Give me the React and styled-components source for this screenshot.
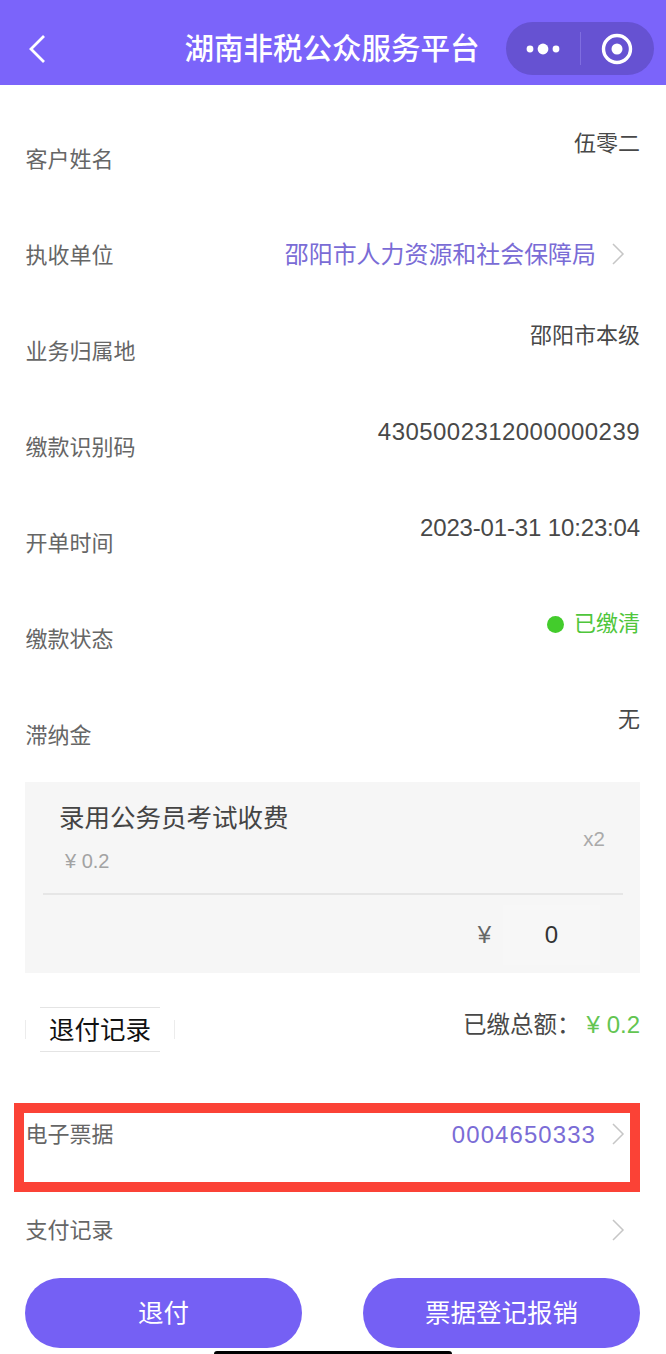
import React from 'react';
import styled, { createGlobalStyle } from 'styled-components';

const GlobalStyle = createGlobalStyle`
    html, body {
        margin: 0;
        padding: 0;
        background: #ffffff;
    }
    body {
        font-family: "Liberation Sans", "Noto Sans CJK SC", sans-serif;
    }
`

const Page = styled.div`
    position: relative;
    width: 666px;
    height: 1354px;
    overflow: hidden;
    background: #ffffff;
`

const NavBar = styled.div`
    position: relative;
    display: flex;
    align-items: center;
    justify-content: center;
    box-sizing: border-box;
    height: 85px;
    padding-top: 12px;
    background: #7b64fa;
`

const BackIcon = styled.svg`
    position: absolute;
    left: 27px;
    top: 33px;
    width: 20px;
    height: 32px;
`

const Title = styled.div`
    margin-left: -2px;
    font-size: 29.5px;
    font-weight: 500;
    line-height: 46px;
    color: #ffffff;
`

const Capsule = styled.div`
    position: absolute;
    left: 506px;
    top: 22px;
    display: flex;
    align-items: center;
    width: 148px;
    height: 53px;
    border-radius: 27px;
    background: #6652d2;
`

const CapsuleSide = styled.div`
    flex: 1;
    display: flex;
    align-items: center;
    justify-content: center;
`

const CapsuleLine = styled.div`
    width: 1px;
    height: 33px;
    background: #7f6de0;
`

const Content = styled.div`
    padding: 25px 26px 0 25px;
`

const Row = styled.div`
    position: relative;
    display: flex;
    align-items: center;
    justify-content: space-between;
    height: 92px;
    padding-top: 4px;
`

const Label = styled.div`
    padding-left: 0.5px;
    font-size: 22px;
    line-height: 30px;
    color: #666666;
`

const Value = styled.div`
    align-self: flex-start;
    padding-top: 15px;
    font-size: ${(props) => (props.$spacing !== undefined ? 24 : 22)}px;
    line-height: 30px;
    color: #484848;
    letter-spacing: ${(props) => props.$spacing || 0}px;
`

const LinkValue = styled.div`
    display: flex;
    align-items: center;
    margin-top: ${(props) => props.$offset || 0}px;
    font-size: 23.95px;
    line-height: 30px;
    color: #7a6cd6;
    letter-spacing: ${(props) => props.$spacing || 0}px;
`

const Chevron = styled.svg`
    flex-shrink: 0;
    width: 14px;
    height: 24px;
    margin: 0 15px 2px 15px;
`

const Status = styled(Value)`
    display: flex;
    align-items: center;
    color: #4fc63b;
`

const StatusDot = styled.span`
    width: 17px;
    height: 17px;
    margin-right: 10px;
    border-radius: 50%;
    background: #43cc2c;
`

const Card = styled.div`
    height: 191px;
    background: #f6f6f6;
`

const CardTop = styled.div`
    display: flex;
    align-items: center;
    justify-content: space-between;
    height: 111px;
    padding: 0 35px 0 34px;
`

const ItemName = styled.div`
    font-size: 25.5px;
    line-height: 34px;
    color: #444444;
`

const ItemPrice = styled.div`
    margin-top: 13px;
    padding-left: 6px;
    font-size: 20px;
    line-height: 26px;
    color: #a3a3a3;
`

const ItemCount = styled.div`
    padding-top: 2px;
    font-size: 20.5px;
    color: #aaaaaa;
`

const CardLine = styled.div`
    height: 2px;
    margin: 0 17px 0 18px;
    background: #e6e6e6;
`

const CardBottom = styled.div`
    display: flex;
    align-items: center;
    justify-content: flex-end;
    height: 78px;
    padding: 2px 40px 0 0;
    box-sizing: border-box;
`

const Yen = styled.div`
    margin-right: 12px;
    font-size: 24px;
    color: #666666;
`

const AmountBox = styled.div`
    width: 97px;
    height: 60px;
    font-size: 24px;
    line-height: 60px;
    text-align: center;
    color: #333333;
    background: #f7f7f7;
`

const RefundRow = styled.div`
    display: flex;
    align-items: flex-start;
    justify-content: space-between;
    height: 78px;
    margin-top: 34px;
`

const RefundButton = styled.button`
    position: relative;
    width: 150px;
    height: 45px;
    padding: 0 0 5px 0;
    border: none;
    font-family: inherit;
    font-size: 25.5px;
    color: #111111;
    background: #ffffff;

    &::before {
        content: "";
        position: absolute;
        left: 15px;
        right: 15px;
        top: 0;
        bottom: 0;
        border-top: 1px solid #e4e4e4;
        border-bottom: 1px solid #e4e4e4;
    }

    &::after {
        content: "";
        position: absolute;
        left: 0;
        right: 0;
        top: 13px;
        bottom: 13px;
        border-left: 1px solid #ececec;
        border-right: 1px solid #ececec;
    }
`

const Total = styled.div`
    display: flex;
    align-items: baseline;
    padding-top: 2px;
    font-size: 23.5px;
    line-height: 32px;
    color: #484848;
`

const TotalAmount = styled.span`
    margin-left: 6px;
    font-size: 24px;
    color: #63c551;
`

const Highlight = styled.div`
    position: absolute;
    left: -11px;
    top: 18px;
    width: 626px;
    height: 89px;
    box-sizing: border-box;
    border: 10px solid #fb4236;
    pointer-events: none;
`

const Buttons = styled.div`
    display: flex;
    justify-content: space-between;
    margin-top: 1px;
`

const ActionButton = styled.button`
    width: 277px;
    height: 70px;
    padding: 0 0 5px 0;
    border: none;
    border-radius: 35px;
    font-family: inherit;
    font-size: 25.5px;
    color: #ffffff;
    background: #7560f4;
`

const HomeBar = styled.div`
    position: absolute;
    left: 214px;
    bottom: 0;
    width: 238px;
    height: 3px;
    border-radius: 3px 3px 0 0;
    background: #000000;
`

function RowChevron() {
    return (
        <Chevron viewBox="0 0 14 24" fill="none">
            <path d="M2 2 L12 12 L2 22" stroke="#c6c6c6" strokeWidth="1.5" />
        </Chevron>
    );
}

const rows = [
    { label: '客户姓名', value: '伍零二' },
    { label: '执收单位', link: '邵阳市人力资源和社会保障局' },
    { label: '业务归属地', value: '邵阳市本级' },
    { label: '缴款识别码', value: '4305002312000000239', spacing: 0.45 },
    { label: '开单时间', value: '2023-01-31 10:23:04', spacing: -0.15 },
    { label: '缴款状态', status: '已缴清' },
    { label: '滞纳金', value: '无' },
];

function App() {
    return (
        <Page>
            <GlobalStyle />
            <NavBar>
                <BackIcon viewBox="0 0 20 32" fill="none">
                    <path d="M17 3 L4 16 L17 29" stroke="#ffffff" strokeWidth="2.8" />
                </BackIcon>
                <Title>湖南非税公众服务平台</Title>
                <Capsule>
                    <CapsuleSide>
                        <svg width="34" height="14" viewBox="0 0 34 14">
                            <circle cx="4" cy="7" r="3.4" fill="#ffffff" />
                            <circle cx="17" cy="7" r="5.4" fill="#ffffff" />
                            <circle cx="30" cy="7" r="3.4" fill="#ffffff" />
                        </svg>
                    </CapsuleSide>
                    <CapsuleLine />
                    <CapsuleSide>
                        <svg width="32" height="32" viewBox="0 0 32 32">
                            <circle cx="16" cy="16" r="13.5" fill="none" stroke="#ffffff" strokeWidth="3.4" />
                            <circle cx="16" cy="16" r="5.5" fill="#ffffff" />
                        </svg>
                    </CapsuleSide>
                </Capsule>
            </NavBar>
            <Content>
                {rows.map((row) => (
                    <Row key={row.label}>
                        <Label>{row.label}</Label>
                        {row.value && <Value $spacing={row.spacing}>{row.value}</Value>}
                        {row.link && (
                            <LinkValue $offset={-2}>
                                {row.link}
                                <RowChevron />
                            </LinkValue>
                        )}
                        {row.status && (
                            <Status>
                                <StatusDot />
                                {row.status}
                            </Status>
                        )}
                    </Row>
                ))}
                <Card>
                    <CardTop>
                        <div>
                            <ItemName>录用公务员考试收费</ItemName>
                            <ItemPrice>¥ 0.2</ItemPrice>
                        </div>
                        <ItemCount>x2</ItemCount>
                    </CardTop>
                    <CardLine />
                    <CardBottom>
                        <Yen>¥</Yen>
                        <AmountBox>0</AmountBox>
                    </CardBottom>
                </Card>
                <RefundRow>
                    <RefundButton>退付记录</RefundButton>
                    <Total>
                        已缴总额：<TotalAmount>¥ 0.2</TotalAmount>
                    </Total>
                </RefundRow>
                <Row>
                    <Label>电子票据</Label>
                    <LinkValue $spacing={1.1}>
                        0004650333
                        <RowChevron />
                    </LinkValue>
                    <Highlight />
                </Row>
                <Row>
                    <Label>支付记录</Label>
                    <RowChevron />
                </Row>
                <Buttons>
                    <ActionButton>退付</ActionButton>
                    <ActionButton>票据登记报销</ActionButton>
                </Buttons>
            </Content>
            <HomeBar />
        </Page>
    );
}

export default App
